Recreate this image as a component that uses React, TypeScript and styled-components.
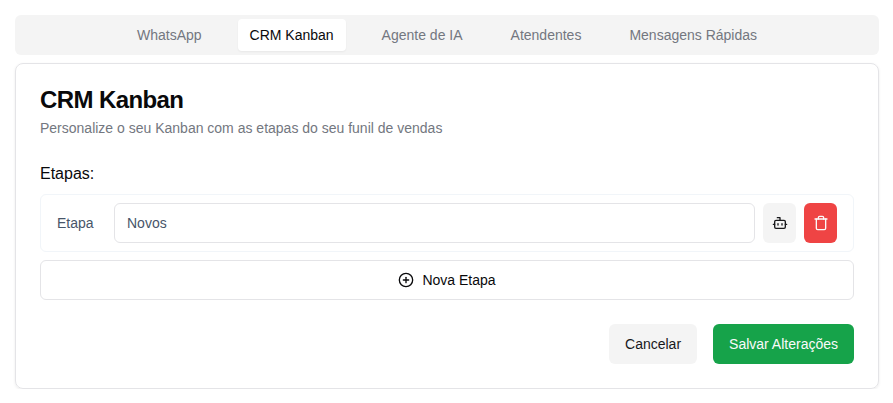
import React from "react";
import styled, { createGlobalStyle } from "styled-components";
import { Bot, CirclePlus } from "lucide-react";

const GlobalStyle = createGlobalStyle`
  *, *::before, *::after { box-sizing: border-box; }
  body {
    margin: 0;
    background: #fff;
    color: #09090b;
    font-family: "Liberation Sans", Arial, sans-serif;
    font-size: 14px;
    line-height: 20px;
  }
  button, input { font: inherit; color: inherit; }
`;

const Page = styled.main`
  padding: 15px 14px 0 15px;
`;

const TabList = styled.nav`
  display: flex;
  align-items: center;
  justify-content: center;
  gap: 24px;
  height: 40px;
  padding: 4px;
  border-radius: 6px;
  background: #f4f4f4;
`;

const Tab = styled.button<{ $active?: boolean }>`
  height: 32px;
  padding: 0 12px;
  border: 0;
  border-radius: 4px;
  white-space: nowrap;
  background: ${(p) => (p.$active ? "#fff" : "transparent")};
  color: ${(p) => (p.$active ? "#09090b" : "#737780")};
  box-shadow: ${(p) => (p.$active ? "0 1px 2px rgba(0, 0, 0, 0.05)" : "none")};
`;

const Card = styled.section`
  height: 326px;
  margin-top: 8px;
  padding: 24px;
  border: 1px solid #e4e4e7;
  border-radius: 8px;
  box-shadow: 0 1px 3px rgba(0, 0, 0, 0.08);
`;

const Title = styled.h1`
  margin: 0;
  font-size: 24px;
  line-height: 24px;
  letter-spacing: -0.6px;
  font-weight: 700;
`;

const Description = styled.p`
  margin: 6px 0 24px;
  color: #737780;
`;

const SectionLabel = styled.h2`
  margin: 0 0 8px;
  font-size: 16px;
  line-height: 24px;
  font-weight: 400;
`;

const StageRow = styled.div`
  display: flex;
  align-items: center;
  gap: 8px;
  height: 58px;
  padding: 0 16px;
  border: 1px solid #f1f5f9;
  border-radius: 6px;
`;

const StageLabel = styled.label`
  width: 49px;
  color: #475569;
`;

const StageInput = styled.input`
  flex: 1;
  min-width: 0;
  height: 40px;
  padding: 0 12px;
  border: 1px solid #e4e4e7;
  border-radius: 6px;
  background: #fff;
  color: #475569;
`;

const Button = styled.button<{ $tone: "muted" | "danger" | "success" | "outline"; $icon?: boolean; $block?: boolean }>`
  display: inline-flex;
  align-items: center;
  justify-content: center;
  gap: 8px;
  height: 40px;
  width: ${(p) => (p.$block ? "100%" : p.$icon ? "33px" : "auto")};
  padding: ${(p) => (p.$icon ? "0" : "0 16px")};
  border: ${(p) => (p.$tone === "outline" ? "1px solid #e4e4e7" : "0")};
  border-radius: 6px;
  background: ${(p) => ({ muted: "#f4f4f4", danger: "#ef4444", success: "#16a34a", outline: "#fff" })[p.$tone]};
  color: ${(p) => ({ muted: "#18181b", danger: "#fafafa", success: "#fafafa", outline: "#09090b" })[p.$tone]};
`;

const NewStage = styled.div`
  margin-top: 8px;
  display: flex;
`;

const Actions = styled.footer`
  display: flex;
  justify-content: flex-end;
  gap: 16px;
  margin-top: 24px;
`;

const TrashIcon = () => (
  <svg width="16" height="16" viewBox="0 0 24 24" fill="none" stroke="currentColor" strokeWidth="2" strokeLinecap="round" strokeLinejoin="round">
    <path d="M3 6h18" />
    <path d="M19 6v14c0 1-1 2-2 2H7c-1 0-2-1-2-2V6" />
    <path d="M8 6V4c0-1 1-2 2-2h4c1 0 2 1 2 2v2" />
  </svg>
);

const tabs = ["WhatsApp", "CRM Kanban", "Agente de IA", "Atendentes", "Mensagens Rápidas"];

export default function App() {
  return (
    <>
      <GlobalStyle />
      <Page>
        <TabList>
          {tabs.map((tab) => (
            <Tab key={tab} $active={tab === "CRM Kanban"}>{tab}</Tab>
          ))}
        </TabList>
        <Card>
          <Title>CRM Kanban</Title>
          <Description>Personalize o seu Kanban com as etapas do seu funil de vendas</Description>
          <SectionLabel>Etapas:</SectionLabel>
          <StageRow>
            <StageLabel htmlFor="stage">Etapa</StageLabel>
            <StageInput id="stage" defaultValue="Novos" />
            <Button $tone="muted" $icon aria-label="Bot"><Bot size={16} /></Button>
            <Button $tone="danger" $icon aria-label="Excluir"><TrashIcon /></Button>
          </StageRow>
          <NewStage>
            <Button $tone="outline" $block><CirclePlus size={16} />Nova Etapa</Button>
          </NewStage>
          <Actions>
            <Button $tone="muted">Cancelar</Button>
            <Button $tone="success">Salvar Alterações</Button>
          </Actions>
        </Card>
      </Page>
    </>
  );
}
